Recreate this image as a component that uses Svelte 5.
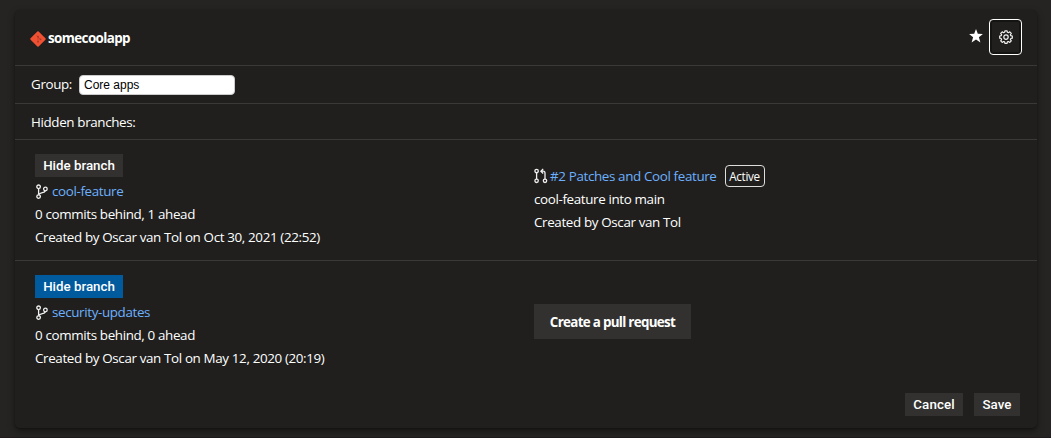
<script>
  const branches = [
    {
      name: 'cool-feature',
      status: '0 commits behind, 1 ahead',
      created: 'Created by Oscar van Tol on Oct 30, 2021 (22:52)',
      hidden: false,
      pr: {
        title: '#2 Patches and Cool feature',
        state: 'Active',
        target: 'cool-feature into main',
        author: 'Created by Oscar van Tol'
      }
    },
    {
      name: 'security-updates',
      status: '0 commits behind, 0 ahead',
      created: 'Created by Oscar van Tol on May 12, 2020 (20:19)',
      hidden: true,
      pr: null
    }
  ];
  let group = $state('Core apps');
</script>

<main>
  <section class="card">
    <header>
      <svg class="git" viewBox="0 0 16 16" width="16" height="16">
        <rect x="2.3" y="2.3" width="11.4" height="11.4" rx="0.9" transform="rotate(45 8 8)" fill="#f05133" />
        <path d="M6.4 4.2 8 5.8v5M8 6l2.4 2.3" stroke="#b8402b" stroke-width="0.8" fill="none" />
        <circle cx="8" cy="5.7" r="0.9" fill="#a33827" />
        <circle cx="8" cy="10.8" r="0.9" fill="#a33827" />
        <circle cx="10.5" cy="8.3" r="0.9" fill="#a33827" />
      </svg>
      <h1>somecoolapp</h1>
      <svg class="star" viewBox="0 0 14 14" width="14" height="14">
        <path d="M7 0 8.8 4.8 13.9 5 9.9 8.2 11.4 13.4 7 10.4 2.6 13.4 4.1 8.2.1 5 5.2 4.8z" fill="#fff" />
      </svg>
      <button class="settings" aria-label="Settings">
        <svg viewBox="0 0 14 14" width="14" height="14" fill="none" stroke="#f0f0f0" stroke-width="1.2" stroke-linejoin="round">
          <path d="M5.9 .8h2.2l.3 1.5 1.1.4 1.3-.9 1.5 1.5-.9 1.3.4 1.1 1.5.3v2.2l-1.5.3-.4 1.1.9 1.3-1.5 1.5-1.3-.9-1.1.4-.3 1.4H5.9l-.3-1.4-1.1-.4-1.3.9-1.5-1.5.9-1.3-.4-1.1L.7 8.2V6l1.5-.3.4-1.1-.9-1.3 1.5-1.5 1.3.9 1.1-.4z" />
          <circle cx="7" cy="7.1" r="2.2" />
        </svg>
      </button>
    </header>

    <div class="group">
      <label for="group">Group:</label>
      <input id="group" bind:value={group} />
    </div>

    <div class="heading"><span>Hidden branches:</span></div>

    {#each branches as b}
      <div class="branch">
        <div class="info">
          <button class="small" class:on={b.hidden}>Hide branch</button>
          <p>
            <svg class="bi" viewBox="0 0 14 16" width="14" height="16" fill="none" stroke="#f0f0f0" stroke-width="1.3">
              <circle cx="3.6" cy="2.8" r="1.8" />
              <circle cx="3.6" cy="12.6" r="1.8" />
              <circle cx="10.4" cy="5" r="1.8" />
              <path d="M3.6 4.6v6.2M10.2 6.8C9.8 9.4 5 8 3.8 10.8" />
            </svg>
            <a class="name" href="#branch">{b.name}</a>
          </p>
          <p>{b.status}</p>
          <p>{b.created}</p>
        </div>
        <div class="pull">
          {#if b.pr}
            <p>
              <svg class="pi" viewBox="0 0 14 16" width="14" height="16" fill="none" stroke="#f0f0f0" stroke-width="1.3">
                <circle cx="2.6" cy="3" r="1.7" />
                <circle cx="2.6" cy="12.8" r="1.7" />
                <circle cx="11" cy="12.8" r="1.7" />
                <path d="M2.6 4.7v6.4M11 11.1V5Q11 3.2 9.2 3.2H7.2M9.2 .9 6.9 3.2 9.2 5.5" />
              </svg>
              <a href="#pull">{b.pr.title}</a>
              <span class="badge">{b.pr.state}</span>
            </p>
            <p>{b.pr.target}</p>
            <p>{b.pr.author}</p>
          {:else}
            <button class="create">Create a pull request</button>
          {/if}
        </div>
      </div>
    {/each}

    <footer>
      <button class="small cancel">Cancel</button>
      <button class="small save">Save</button>
    </footer>
  </section>
</main>

<style>
  :global(body) { background: #252422; }
  main {
    box-sizing: border-box;
    height: 438px;
    padding: 10px 14px 10px 15px;
    border-bottom: 1px solid #1f1b1d;
    color: #fff;
    font: 13.4px/23px 'Open Sans', sans-serif;
    letter-spacing: -0.36px;
  }
  .card {
    box-sizing: border-box;
    height: 418px;
    border-radius: 5px;
    background: #201f1e;
    box-shadow: 0 3px 7px rgba(0, 0, 0, 0.4), 0 1px 2px rgba(0, 0, 0, 0.25);
  }
  header, .group, .heading {
    box-sizing: border-box;
    display: flex;
    align-items: center;
    border-bottom: 1px solid #3a3938;
    padding-left: 16px;
  }
  header { height: 56px; padding: 0 15px; }
  .git { margin-top: 2px; }
  h1 { margin: 2px auto 0 2px; font-size: 13.4px; font-weight: 700; letter-spacing: -0.6px; }
  .star { margin: -3px 6px 0 0; }
  button { border: 0; padding: 0; color: #fff; background: #323130; white-space: nowrap; }
  .settings {
    box-sizing: border-box;
    display: flex;
    align-items: center;
    justify-content: center;
    width: 33px;
    height: 36px;
    margin-top: -2px;
    border: 1px solid #fff;
    border-radius: 4px;
    background: #201f1e;
    box-shadow: inset 0 0 0 2px #141413;
  }
  .group { height: 38px; }
  .group label { width: 48px; }
  input {
    box-sizing: border-box;
    width: 156px;
    height: 20px;
    padding: 0 4px;
    border: 1px solid #ccc;
    border-radius: 4px;
    background: #fff;
    color: #000;
    font: 12px 'Liberation Sans', Arial, sans-serif;
  }
  .heading { height: 36px; padding-top: 1px; }
  .branch { display: grid; grid-template-columns: 499px 1fr; align-items: center; height: 120px; padding-left: 20px; }
  .branch + .branch { border-top: 1px solid #3a3938; }
  .info { padding-top: 3px; }
  .pull:has(p) { padding-bottom: 2px; }
  p { display: flex; align-items: center; height: 23px; margin: 0; white-space: nowrap; }
  a { color: #6cb1ff; text-decoration: none; }
  .name { letter-spacing: -0.36px; }
  .small { display: block; height: 23px; padding: 0; font: 500 13.333px/23px Roboto, sans-serif; letter-spacing: 0.1px; }
  .info .small { width: 88px; margin-bottom: 3px; letter-spacing: 0; }
  .small.on { background: #005a9e; }
  .cancel { width: 58px; }
  .save { width: 46px; }
  .bi { margin-right: 3px; }
  .pi { margin-right: 2px; }
  .badge {
    box-sizing: border-box;
    width: 40px;
    height: 22px;
    margin-left: 8px;
    border: 1px solid #ddd;
    border-radius: 4px;
    font-size: 11.7px;
    line-height: 21px;
    text-align: center;
  }
  .create { width: 157px; height: 35px; padding-top: 2px; font: 700 13.4px 'Open Sans', sans-serif; letter-spacing: -0.7px; }
  footer { display: flex; justify-content: flex-end; gap: 11px; padding: 12px 17px 0 0; }
</style>
